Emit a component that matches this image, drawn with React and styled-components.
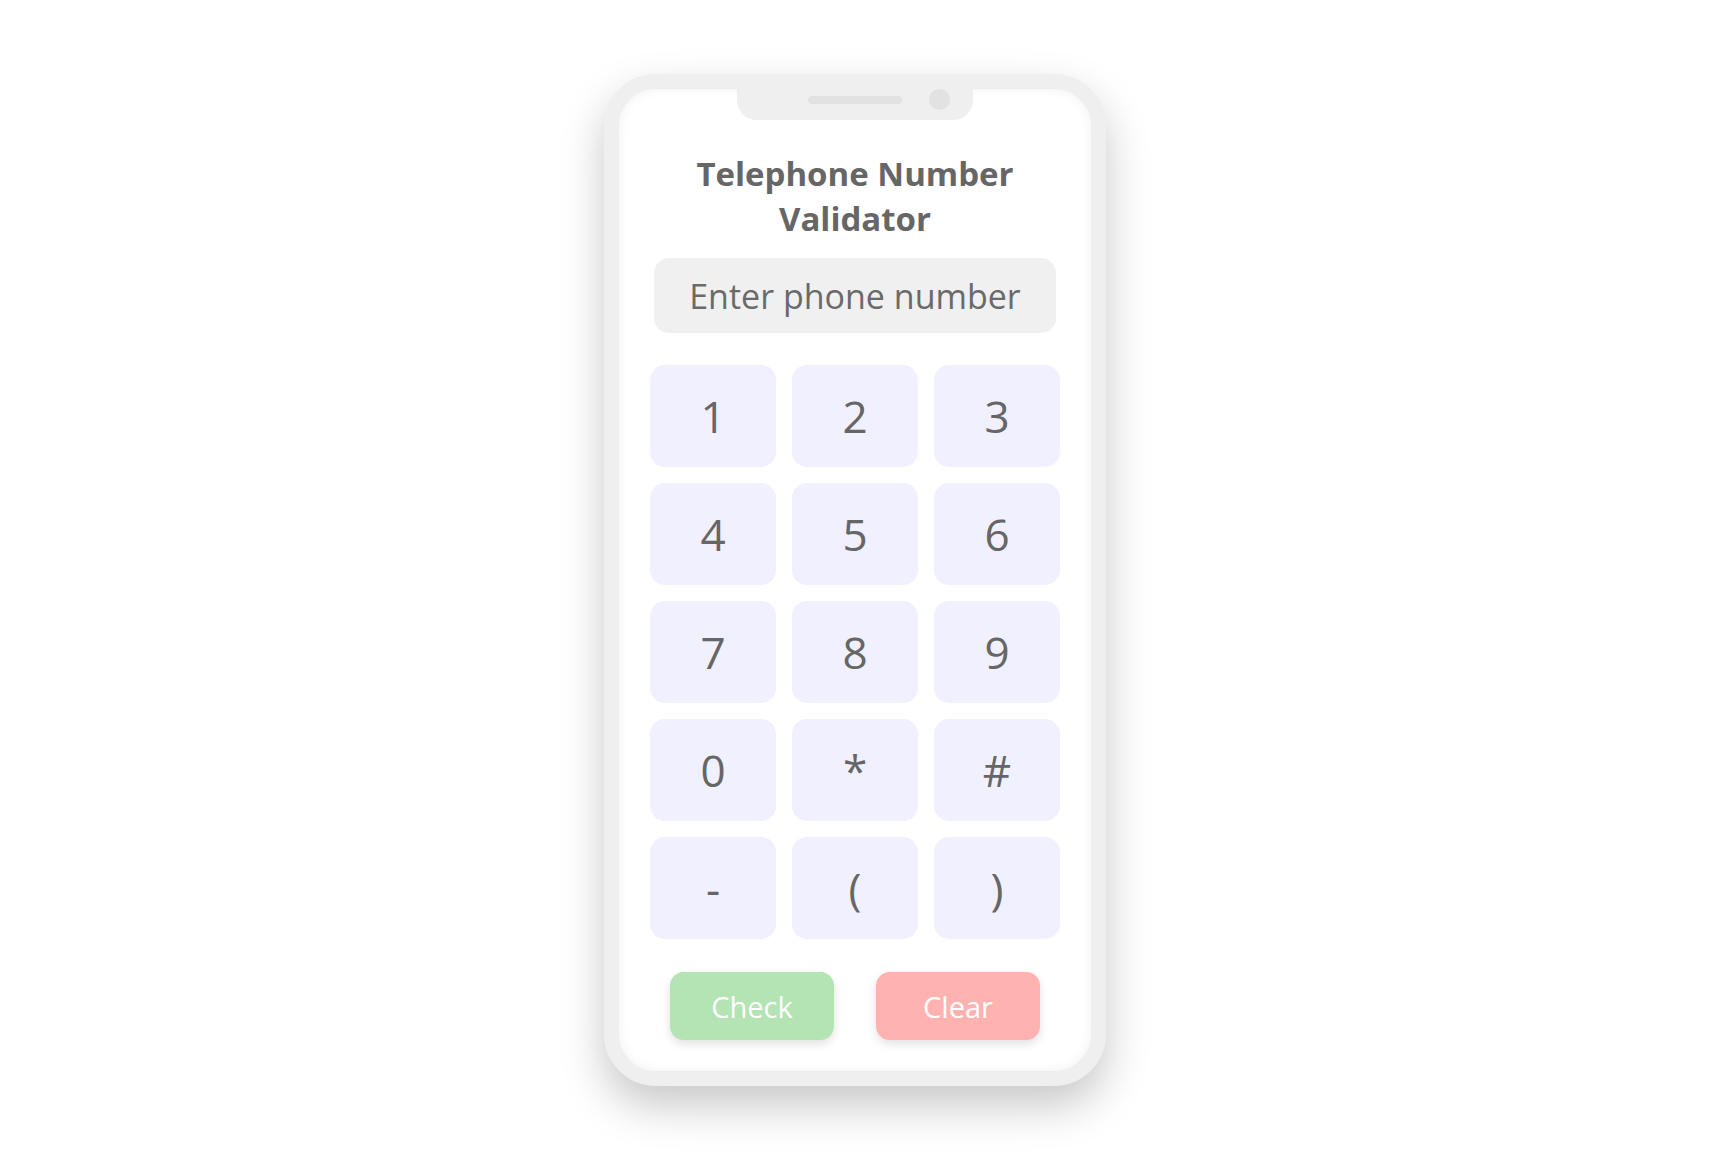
import React from 'react';
import styled, { createGlobalStyle } from 'styled-components';

const GlobalStyle = createGlobalStyle`
  body {
    margin: 0;
    background: #ffffff;
    font-family: 'Open Sans', 'Noto Sans', sans-serif;
  }
`;

const Page = styled.div`
  display: flex;
  justify-content: center;
  box-sizing: border-box;
  height: 1154px;
  padding-top: 74px;
`;

const Phone = styled.div`
  box-sizing: border-box;
  width: 502px;
  height: 1012px;
  border: 15px solid #efefef;
  border-radius: 52px;
  background: #ffffff;
  box-shadow: 0 20px 44px rgba(0, 0, 0, 0.22), inset 0 0 12px rgba(0, 0, 0, 0.06);
  display: flex;
  flex-direction: column;
  align-items: center;
`;

const Notch = styled.div`
  box-sizing: border-box;
  width: 236px;
  height: 31px;
  padding-bottom: 11px;
  background: #efefef;
  border-radius: 0 0 20px 20px;
  display: grid;
  grid-template-columns: 1fr 94px 1fr;
  align-items: center;
`;

const Speaker = styled.span`
  grid-column: 2;
  height: 8px;
  border-radius: 4px;
  background: #e2e2e2;
`;

const Camera = styled.span`
  justify-self: start;
  margin-left: 27px;
  width: 21px;
  height: 21px;
  border-radius: 50%;
  background: #e2e2e2;
`;

const Title = styled.h1`
  margin: 31px 0 0;
  width: 410px;
  font-size: 33px;
  line-height: 45px;
  font-weight: 700;
  text-align: center;
  color: #666666;
`;

const PhoneInput = styled.input`
  box-sizing: border-box;
  margin-top: 17px;
  width: 402px;
  height: 75px;
  border: none;
  outline: none;
  border-radius: 15px;
  background: #f0f0f0;
  font-family: 'Open Sans', 'Noto Sans', sans-serif;
  font-size: 34px;
  color: #666666;
  text-align: center;

  &::placeholder {
    color: #6a6a6a;
    opacity: 1;
  }
`;

const Keypad = styled.div`
  margin-top: 32px;
  display: grid;
  grid-template-columns: repeat(3, 126px);
  grid-auto-rows: 102px;
  gap: 16px;
`;

const Key = styled.button`
  border: none;
  border-radius: 15px;
  background: #f0f0ff;
  font-family: 'Open Sans', 'Noto Sans', sans-serif;
  font-size: 44px;
  color: #666666;
  cursor: pointer;
  padding: 0;
`;

const Actions = styled.div`
  margin-top: 33px;
  display: flex;
  gap: 42px;
`;

const ActionButton = styled.button`
  width: 164px;
  height: 68px;
  border: none;
  border-radius: 14px;
  background: ${props => props.tone};
  box-shadow: 0 4px 10px rgba(0, 0, 0, 0.12);
  font-family: 'Open Sans', 'Noto Sans', sans-serif;
  font-size: 29px;
  color: #ffffff;
  cursor: pointer;
`;

const keys = ['1', '2', '3', '4', '5', '6', '7', '8', '9', '0', '*', '#', '-', '(', ')'];

export default function App () {
  return (
    <Page>
      <GlobalStyle />
      <Phone>
        <Notch>
          <Speaker />
          <Camera />
        </Notch>
        <Title>Telephone Number Validator</Title>
        <PhoneInput placeholder="Enter phone number" />
        <Keypad>
          {keys.map(k => <Key key={k}>{k}</Key>)}
        </Keypad>
        <Actions>
          <ActionButton tone="#b4e3b4">Check</ActionButton>
          <ActionButton tone="#ffb2af">Clear</ActionButton>
        </Actions>
      </Phone>
    </Page>
  );
}
